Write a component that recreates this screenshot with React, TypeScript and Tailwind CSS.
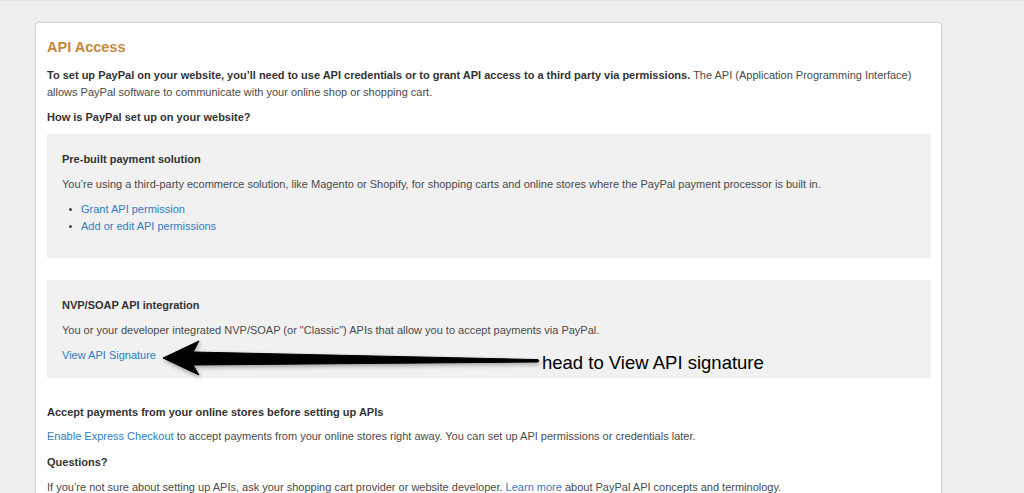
import React from "react";

const Link = ({ children }: { children: React.ReactNode }) => (
  <span className="text-[#2f7dc2]">{children}</span>
);

export default function App() {
  return (
    <div
      className="relative w-[1024px] h-[493px] overflow-hidden bg-[#efefef] border-t border-[#e4e4e4]"
      style={{ fontFamily: '"Liberation Sans", Arial, sans-serif' }}
    >
      <div className="ml-[35px] mt-[21px] w-[907px] h-[520px] bg-white border border-[#d6d6d6] rounded-[4px] shadow-[0_0_2px_rgba(0,0,0,0.08)] pl-[11px] pr-[10px] pt-[14px] text-[11px] leading-[17px] text-[#4a4a4a]">
        <h1 className="text-[14.5px] leading-[20px] font-bold text-[#c7873f]">API Access</h1>
        <p className="mt-[10px]">
          <span className="font-bold text-[#333]">
            To set up PayPal on your website, you’ll need to use API credentials or to grant API access to a third party via permissions.
          </span>{" "}
          The API (Application Programming Interface) allows PayPal software to communicate with your online shop or shopping cart.
        </p>
        <p className="mt-[8px] font-bold text-[#333]">How is PayPal set up on your website?</p>

        <div className="mt-[8px] bg-[#f1f1f1] pl-[15px] pr-[15px] pt-[17px] pb-[23px]">
          <p className="font-bold text-[#333]">Pre-built payment solution</p>
          <p className="mt-[8px]">
            You’re using a third-party ecommerce solution, like Magento or Shopify, for shopping carts and online stores where the PayPal payment processor is built in.
          </p>
          <ul className="mt-[8px] pl-[7px]">
            <li className="flex items-center gap-[9px]">
              <span className="w-[3px] h-[3px] rounded-full bg-[#444]" />
              <Link>Grant API permission</Link>
            </li>
            <li className="flex items-center gap-[9px]">
              <span className="w-[3px] h-[3px] rounded-full bg-[#444]" />
              <Link>Add or edit API permissions</Link>
            </li>
          </ul>
        </div>

        <div className="mt-[22px] bg-[#f1f1f1] pl-[15px] pr-[15px] pt-[17px] pb-[14px]">
          <p className="font-bold text-[#333]">NVP/SOAP API integration</p>
          <p className="mt-[8px]">
            You or your developer integrated NVP/SOAP (or "Classic") APIs that allow you to accept payments via PayPal.
          </p>
          <p className="mt-[8px]">
            <Link>View API Signature</Link>
          </p>
        </div>

        <p className="mt-[26px] font-bold text-[#333]">Accept payments from your online stores before setting up APIs</p>
        <p className="mt-[7px]">
          <Link>Enable Express Checkout</Link> to accept payments from your online stores right away. You can set up API permissions or credentials later.
        </p>
        <p className="mt-[9px] font-bold text-[#333]">Questions?</p>
        <p className="mt-[8px]">
          If you’re not sure about setting up APIs, ask your shopping cart provider or website developer. <Link>Learn more</Link> about PayPal API concepts and terminology.
        </p>
      </div>

      {/* annotation arrow overlay */}
      <svg
        className="absolute left-[150px] top-[330px]"
        width="400"
        height="50"
        viewBox="0 0 400 50"
        style={{ filter: "drop-shadow(1px 2px 2px rgba(0,0,0,0.35))" }}
      >
        <path
          d="M13 27 L49 10 L43 21 L388 28.6 Q389.5 29.8 388 31 L43 34 L49 44 Z"
          fill="#000"
          stroke="#000"
          strokeWidth="1"
          strokeLinejoin="round"
        />
      </svg>
      <div className="absolute left-[542px] top-[351px] text-[18.5px] leading-[22px] text-black">
        head to View API signature
      </div>
    </div>
  );
}
